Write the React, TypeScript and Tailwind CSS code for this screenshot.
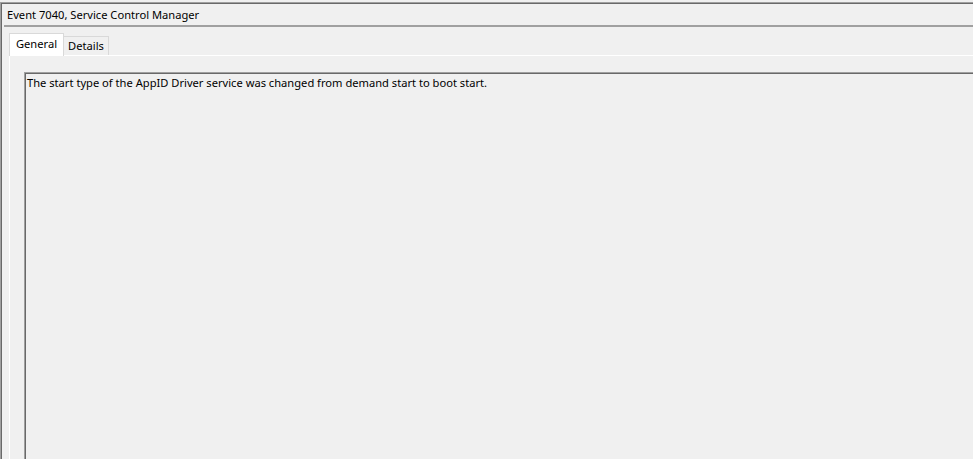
export default function App() {
  return (
    <div
      className="w-[973px] h-[459px] overflow-hidden bg-[#f0f0f0] pt-[2px] text-[11.15px] text-black"
      style={{ fontFamily: '"Noto Sans", "Liberation Sans", sans-serif' }}
    >
      <div className="h-full border-l border-t border-[#a0a0a0]">
        <div className="h-full border-l border-t border-[#696969] flex flex-col">
          {/* title */}
          <div className="h-[21px] pl-[5px] flex items-center leading-none">
            Event 7040, Service Control Manager
          </div>
          <div className="ml-[2px] h-[2px] bg-[#a0a0a0]" />

          {/* tab control */}
          <div className="flex-1 flex flex-col pl-[7px] pt-[6px]">
            <div className="flex items-end h-[22px]">
              <div className="relative z-10 -mb-px w-[55px] h-[23px] bg-white border-t border-l border-r border-[#d9d9d9] flex justify-center pt-[2px] leading-[16px]">
                General
              </div>
              <div className="w-[45px] h-[19px] bg-[#f0f0f0] border-t border-r border-[#d9d9d9] flex justify-center pt-[1px] leading-[16px]">
                Details
              </div>
            </div>
            <div className="flex-1 flex flex-col border-t border-l border-white pl-[14px] pt-[16px]">
              <div className="flex-1 border-t border-l border-[#a0a0a0]">
                <div className="h-full border-t border-l border-[#696969] pl-[1px] pt-[1px] leading-[16px]">
                  The start type of the AppID Driver service was changed from demand start to boot start.
                </div>
              </div>
            </div>
          </div>
        </div>
      </div>
    </div>
  );
}
